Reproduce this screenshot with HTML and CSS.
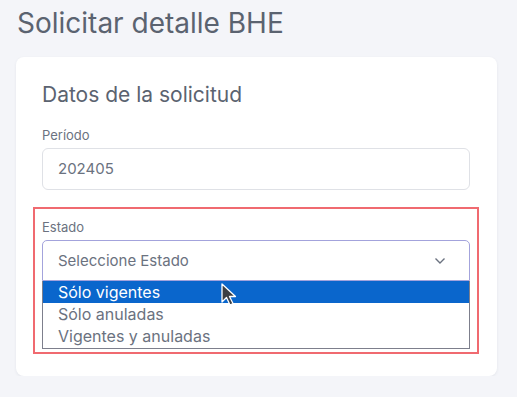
FILE: index.html
```html
<!DOCTYPE html>
<html lang="es">
  <head>
    <meta charset="utf-8">
    <meta name="viewport" content="width=device-width, initial-scale=1">
    <title>Solicitar detalle BHE</title>
    <link rel="stylesheet" href="styles.css">
  </head>
  <body>
    <h1 class="pageTitle">Solicitar detalle BHE</h1>

    <div class="card">
      <h2 class="cardTitle">Datos de la solicitud</h2>

      <div class="field">
        <label class="fieldLabel" for="periodo">Período</label>
        <div class="input" id="periodo">202405</div>
      </div>

      <div class="field highlight">
        <label class="fieldLabel">Estado</label>
        <div class="select">
          <span>Seleccione Estado</span>
          <svg class="chevron" width="12" height="8" viewBox="0 0 12 8">
            <path d="M1.5 1.5 L6 6 L10.5 1.5" fill="none" stroke="#6b7280" stroke-width="1.4"/>
          </svg>
        </div>
        <div class="options">
          <div class="option selected">Sólo vigentes
            <svg class="cursor" width="16" height="24" viewBox="0 0 16 24">
              <path d="M1 1 L1 19 L5.5 14.5 L9 22 L12 20.5 L8.5 13.5 L14.5 13.5 Z" fill="#3c3f44" stroke="#ffffff" stroke-width="1.3" stroke-linejoin="round"/>
            </svg>
          </div>
          <div class="option">Sólo anuladas</div>
          <div class="option">Vigentes y anuladas</div>
        </div>
      </div>
    </div>
  </body>
</html>
```

FILE: styles.css
```css
body {
  margin: 0;
  background: #f4f5f9;
  font-family: "Inter", "Noto Sans", sans-serif;
  color: #5b6370;
}

.pageTitle {
  margin: 0;
  padding: 6px 17px 0 17px;
  font-size: 28px;
  font-weight: 400;
  line-height: 34px;
  color: #5b6370;
}

.card {
  margin: 17px 20px 0 16px;
  padding: 23px 27px 22px 26px;
  background: #ffffff;
  border-radius: 8px;
  box-shadow: 0 1px 3px rgba(40, 50, 80, 0.08);
}

.cardTitle {
  margin: 0 0 15px 0;
  font-size: 21px;
  font-weight: 400;
  line-height: 30px;
  color: #5b6370;
}

.field {
  margin-bottom: 17px;
}

.fieldLabel {
  display: block;
  font-size: 13px;
  line-height: 20px;
  color: #6b7280;
  margin-bottom: 3px;
}

.input {
  height: 40px;
  border: 1px solid #dfe1e6;
  border-radius: 6px;
  padding: 0 15px;
  font-size: 15px;
  line-height: 40px;
  color: #6b7280;
}

.highlight {
  margin: 0 -9px;
  padding: 8px 7px 3px 7px;
  border: 2px solid #f06a70;
}

.select {
  display: flex;
  align-items: center;
  justify-content: space-between;
  height: 39px;
  border: 1px solid #a3a3dc;
  border-radius: 5px 5px 0 0;
  padding: 0 23px 0 15px;
  font-size: 15px;
  color: #6b7280;
}

.options {
  border: 1px solid #7d7f8c;
  border-top: none;
  padding-bottom: 1px;
  font-size: 16px;
  color: #6b7280;
}

.option {
  position: relative;
  height: 22px;
  line-height: 22px;
  padding-left: 15px;
}

.option.selected {
  background: #0a66cc;
  color: #ffffff;
}

.cursor {
  position: absolute;
  left: 178px;
  top: 2px;
}
```
